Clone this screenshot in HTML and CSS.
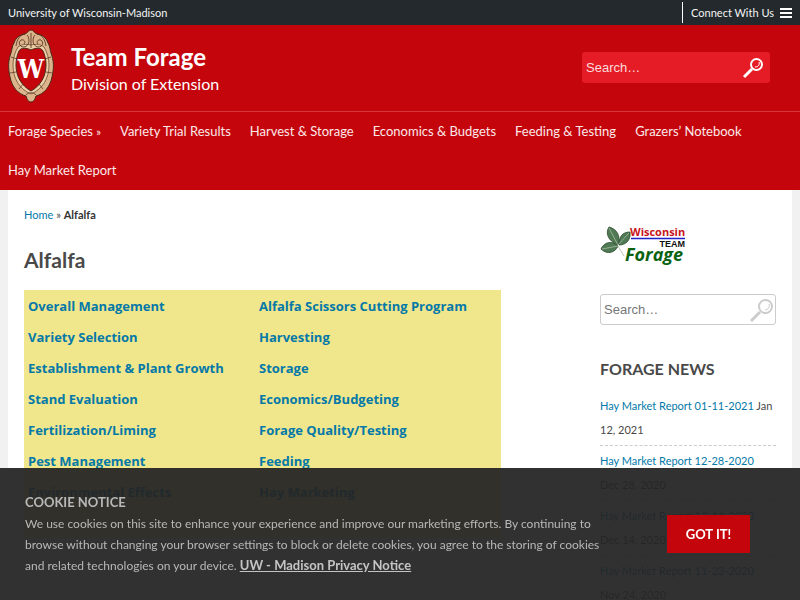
FILE: index.html
```html
<!DOCTYPE html>
<html lang="en">
<head>
<meta charset="utf-8">
<title>Alfalfa – Team Forage</title>
<link rel="stylesheet" href="styles.css">
</head>
<body>
<div class="topbar">
  <a class="topbar-link" href="#">University of Wisconsin-Madison</a>
  <button class="connect" type="button">Connect With Us
    <svg class="burger" viewBox="0 0 12 12" aria-hidden="true"><path d="M0 2h12M0 6h12M0 10h12" stroke="#fff" stroke-width="2"/></svg>
  </button>
</div>
<header class="header">
  <div class="brand">
    <svg class="crest" viewBox="0 0 46 74" role="img" aria-label="UW crest">
      <g stroke="#4a2a1a" stroke-width="1" fill="#dcb48c">
        <path d="M23 1c3 0 3 3 6 4 5 1 9 3 11 9 2 3 2 7 3 10 3 8 3 15 1 24-2 10-8 17-16 19-1 3-2 6-5 6s-4-3-5-6C10 65 4 58 2 48 0 39 0 32 3 24c1-3 1-7 3-10 2-6 6-8 11-9 3-1 3-4 6-4z"/>
        <path d="M23 16c-5-1-9-1-13 2-3 5-5 11-5 18 0 13 6 24 18 29 12-5 18-16 18-29 0-7-2-13-5-18-4-3-8-3-13-2z" fill="#ecd0a8" stroke-width=".6"/>
        <path d="M23 21c-4-2-10-3-12 1-2 4-3 9-3 14 0 12 6 21 15 26 9-5 15-14 15-26 0-5-1-10-3-14-2-4-8-3-12-1z" fill="#c5050c"/>
        <path d="M23 4v15M19 6c3 3 3 11-3 12-5 0-6-5-3-7 3-1 5 2 3 4M27 6c-3 3-3 11 3 12 5 0 6-5 3-7-3-1-5 2-3 4M17 5C11 6 9 11 8 17M29 5c6 1 8 6 9 12" fill="none" stroke-width=".8"/>
        <path d="M3 28l6 2M2 44l6-1M11 60l4-5M43 28l-6 2M44 44l-6-1M35 60l-4-5M18 66c2-3 8-3 10 0" fill="none" stroke-width=".7"/>
      </g>
      <text class="crest-letter" x="23" y="49" text-anchor="middle">W</text>
    </svg>
    <div>
      <a class="site-title" href="#">Team Forage</a>
      <a class="site-subtitle" href="#">Division of Extension</a>
    </div>
  </div>
  <form class="search search-header">
    <input type="search" placeholder="Search…" aria-label="Search site">
    <button type="button" aria-label="Submit site search">
      <svg viewBox="0 0 24 24" aria-hidden="true"><circle cx="15.500" cy="8.500" r="5.500"/><path d="M3 21l8-8" class="handle"/><path d="M18 6c1 3-1 5-4 5" class="shine"/></svg>
    </button>
  </form>
</header>
<nav class="nav" aria-label="Main">
  <a href="#">Forage Species <span class="raquo">»</span></a>
  <a href="#">Variety Trial Results</a>
  <a href="#">Harvest &amp; Storage</a>
  <a href="#">Economics &amp; Budgets</a>
  <a href="#">Feeding &amp; Testing</a>
  <a href="#">Grazers’ Notebook</a>
  <a href="#">Hay Market Report</a>
</nav>
<div class="page">
  <main class="main">
    <p class="crumbs"><a href="#">Home</a> <span class="raquo">»</span> <strong>Alfalfa</strong></p>
    <h1>Alfalfa</h1>
    <table class="topics">
      <tbody>
        <tr><td><a href="#">Overall Management</a></td><td><a href="#">Alfalfa Scissors Cutting Program</a></td></tr>
        <tr><td><a href="#">Variety Selection</a></td><td><a href="#">Harvesting</a></td></tr>
        <tr><td><a href="#">Establishment &amp; Plant Growth</a></td><td><a href="#">Storage</a></td></tr>
        <tr><td><a href="#">Stand Evaluation</a></td><td><a href="#">Economics/Budgeting</a></td></tr>
        <tr><td><a href="#">Fertilization/Liming</a></td><td><a href="#">Forage Quality/Testing</a></td></tr>
        <tr><td><a href="#">Pest Management</a></td><td><a href="#">Feeding</a></td></tr>
        <tr><td><a href="#">Environmental Effects</a></td><td><a href="#">Hay Marketing</a></td></tr>
        <tr><td></td><td></td></tr>
      </tbody>
    </table>
  </main>
  <aside class="side">
    <svg class="forage-logo" viewBox="0 0 88 42" role="img" aria-label="Wisconsin Team Forage">
      <g fill="#4f7a53" stroke="#29482d" stroke-width=".8">
        <path d="M18 20C8 16 5 8 9 2c8 2 12 9 9 18z"/>
        <path d="M19 20c0-8 3-13 11-13 1 8-4 13-11 13z"/>
        <path d="M18 21C12 15 4 17 1 24c6 6 14 4 17-3z"/>
        <path d="M9 3l9 17L29 8M2 24l16-3 6 10" fill="none" stroke="#a8bda5"/>
      </g>
      <text class="logo-wisconsin" x="30" y="11">Wisconsin</text>
      <path d="M31 13.500h54" stroke="#2222cc" stroke-width="1.500"/>
      <text class="logo-team" x="85" y="22" text-anchor="end">TEAM</text>
      <text class="logo-name" x="25" y="36">Forage</text>
    </svg>
    <form class="search search-side">
      <input type="search" placeholder="Search…" aria-label="Search">
      <button type="button" aria-label="Submit search">
        <svg viewBox="0 0 24 24" aria-hidden="true"><circle cx="15.500" cy="8.500" r="6.500"/><path d="M1 23l9-9" class="handle"/><path d="M19 6c1 3-1 6-4 6" class="shine"/></svg>
      </button>
    </form>
    <h2>Forage News</h2>
    <ul class="news">
      <li><a href="#">Hay Market Report 01-11-2021</a> Jan 12, 2021</li>
      <li><a href="#">Hay Market Report 12-28-2020</a> <span class="date">Dec 28, 2020</span></li>
      <li><a href="#">Hay Market Report 12-14-2020</a> <span class="date">Dec 14, 2020</span></li>
      <li><a href="#">Hay Market Report 11-23-2020</a> <span class="date">Nov 24, 2020</span></li>
    </ul>
  </aside>
</div>
<section class="cookie" aria-label="Cookie notice">
  <div class="cookie-text">
    <h2>Cookie Notice</h2>
    <p>We use cookies on this site to enhance your experience and improve our marketing efforts. By continuing to browse without changing your browser settings to block or delete cookies, you agree to the storing of cookies and related technologies on your device. <a href="#">UW - Madison Privacy Notice</a></p>
  </div>
  <button class="accept" type="button">GOT IT!</button>
</section>
</body>
</html>
```

FILE: styles.css
```css
* { box-sizing: border-box; }
html { height: 100%; overflow: hidden; }
body {
  margin: 0;
  height: 100%;
  overflow: hidden;
  background: #f1f1f1;
  color: #494949;
  font-family: Lato, "Liberation Sans", sans-serif;
}
a { color: #0479a8; text-decoration: none; }
button { border: 0; padding: 0; background: none; font-family: inherit; }
.raquo { font-size: 11px; line-height: 1; }

.topbar {
  display: flex;
  justify-content: space-between;
  align-items: center;
  height: 25px;
  padding: 0 8px;
  background: #23292d;
  font-size: 11px;
}
.topbar-link { color: #f4f4f4; }
.connect {
  display: flex;
  align-items: center;
  gap: 6px;
  height: 21px;
  padding-left: 8px;
  border-left: 1px solid #fff;
  color: #f4f4f4;
  font-size: 11px;
}
.burger { width: 12px; height: 12px; }

.header {
  display: flex;
  justify-content: space-between;
  align-items: flex-start;
  height: 86px;
  padding: 4px 30px 0 8px;
  background: #c5050c;
}
.brand { display: flex; gap: 17px; }
.crest { width: 46px; height: 74px; }
.crest-letter { font: bold 26px "Liberation Sans Narrow", "DejaVu Serif Condensed", serif; fill: #fff; }
.site-title, .site-subtitle { display: block; color: #fff; }
.site-title { margin-top: 12px; font-size: 24px; line-height: 32px; font-weight: 700; }
.site-subtitle { font-size: 16px; line-height: 22px; }

.search { display: flex; align-items: center; margin: 0; border-radius: 3px; }
.search input {
  flex: 1;
  min-width: 0;
  padding: 0;
  border: 0;
  outline: 0;
  background: none;
  font: 13px "Liberation Sans", sans-serif;
}
.search button { display: flex; }
.search svg { width: 24px; height: 24px; fill: none; stroke: currentColor; stroke-width: 2; }
.search .handle { stroke-width: 3; }
.search .shine { stroke-width: 1; }
.search-header {
  width: 188px;
  height: 31px;
  margin-top: 23px;
  padding: 0 5px 0 4px;
  background: #e51c26;
}
.search-header input::placeholder { color: #fbdcdd; }
.search-header button { color: #fff; }

.nav {
  display: flex;
  flex-wrap: wrap;
  column-gap: 19px;
  padding: 0 8px;
  border-top: 1px solid #d4373c;
  background: #c5050c;
  font-size: 13px;
  line-height: 39px;
}
.nav a { color: #fbe9e9; }

.page {
  display: flex;
  justify-content: space-between;
  margin: 0 8px;
  padding: 0 16px;
  background: #fff;
}
.main { width: 477px; }
.crumbs { margin: 16px 0 0; font-size: 11px; line-height: 18px; }
.crumbs strong { color: #333; }
h1 { margin: 20px 0 14px; font-size: 21px; line-height: 32px; font-weight: 700; }
.topics {
  width: 100%;
  margin-bottom: 80px;
  border-spacing: 0;
  background: #f0e68c;
  font: bold 13px "Open Sans", sans-serif;
}
.topics td { height: 31px; padding: 0 4px; }
.topics td:first-child { width: 231px; }

.side { width: 176px; }
.forage-logo { display: block; width: 88px; height: 42px; margin-top: 35px; }
.logo-wisconsin { font: bold 11px "Open Sans", sans-serif; fill: #c8141c; }
.logo-team { font: bold 9px "Liberation Sans", sans-serif; fill: #111; }
.logo-name { font: italic bold 18px "Open Sans", sans-serif; fill: #0b6312; }
.search-side { height: 31px; margin-top: 27px; padding: 0 1px 0 3px; border: 1px solid #ccc; }
.search-side input::placeholder { color: #777; }
.search-side button { color: #ccc; }
.side h2 {
  margin: 32px 0 13px;
  font-size: 16px;
  line-height: 24px;
  font-weight: 700;
  text-transform: uppercase;
}
.news { margin: 0; padding: 0; list-style: none; font-size: 11px; line-height: 24px; }
.news li { padding-bottom: 3px; margin-bottom: 3px; border-bottom: 1px dashed #ccc; }
.date { white-space: nowrap; }

.cookie {
  position: fixed;
  left: 0;
  right: 0;
  bottom: 0;
  display: flex;
  justify-content: space-between;
  align-items: center;
  padding: 24px 50px 24px 25px;
  background: rgba(36, 36, 36, 0.94);
  color: #b8b8b8;
}
.cookie-text { width: 590px; }
.cookie h2 { margin: 0; font-size: 13px; line-height: 21px; text-transform: uppercase; }
.cookie p { margin: 0; font-size: 12px; line-height: 21px; }
.cookie a { color: #c4c4c4; font-size: 13px; line-height: 1; font-weight: 700; text-decoration: underline; }
.accept {
  width: 83px;
  height: 38px;
  background: #c5050c;
  color: #fff;
  font-size: 13px;
  font-weight: 700;
}
```
